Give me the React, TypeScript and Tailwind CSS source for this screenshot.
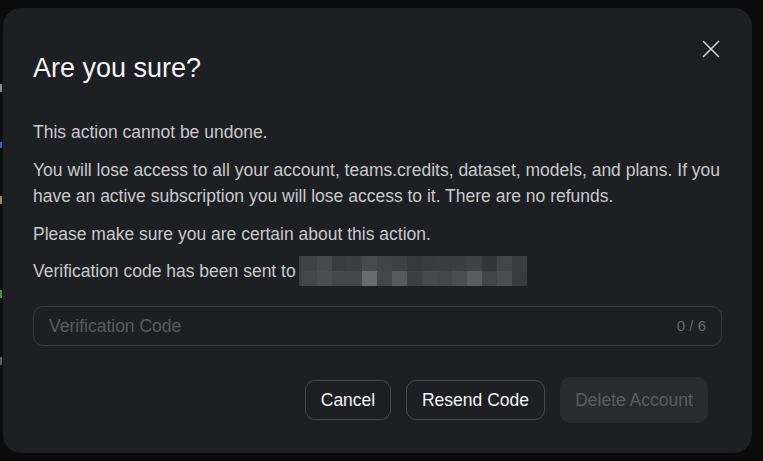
import { X } from "lucide-react";

const pixelRows = [
  [
    "bg-[#404244]", "bg-[#47494b]", "bg-[#3a3b3d]", "bg-[#3d3e40]", "bg-[#484a4c]",
    "bg-[#424345]", "bg-[#3f4042]", "bg-[#37383a]", "bg-[#3a3b3d]", "bg-[#3b3c3e]",
    "bg-[#3d3e40]", "bg-[#404143]", "bg-[#333436]", "bg-[#434547]", "bg-[#3c3d3f]",
  ],
  [
    "bg-[#444648]", "bg-[#4a4c4e]", "bg-[#454749]", "bg-[#454749]", "bg-[#6a6b6d]",
    "bg-[#434547]", "bg-[#58595b]", "bg-[#3e3f41]", "bg-[#47484a]", "bg-[#444547]",
    "bg-[#4c4d4f]", "bg-[#5a5b5d]", "bg-[#434446]", "bg-[#4c4d4f]", "bg-[#3a3b3d]",
  ],
];

// blurred-out email address
function RedactedEmail() {
  return (
    <div className="ml-[3px] flex flex-col bg-[#3e3f41] pl-[3px]">
      {pixelRows.map((row, i) => (
        <div key={i} className="flex">
          {row.map((c, j) => (
            <div key={j} className={`h-[15px] w-[15px] ${c}`} />
          ))}
        </div>
      ))}
    </div>
  );
}

export default function App() {
  return (
    <div
      className="relative h-[461px] w-[763px] overflow-hidden bg-[#0b0b0c] pl-[3px] pt-[8px]"
      style={{ fontFamily: '"Liberation Sans", Arial, sans-serif' }}
    >
      {/* bits of the page behind the overlay */}
      <div className="absolute left-0 top-[84px] h-[8px] w-[2px] bg-[#8a8a8a]" />
      <div className="absolute left-0 top-[142px] h-[6px] w-[2px] bg-[#3b5bd6]" />
      <div className="absolute left-0 top-[196px] h-[8px] w-[2px] bg-[#a08a50]" />
      <div className="absolute left-0 top-[290px] h-[8px] w-[2px] bg-[#3f9a2c]" />
      <div className="absolute left-0 top-[357px] h-[8px] w-[2px] bg-[#5a5f66]" />

      <div className="relative flex h-[445px] w-[749px] flex-col rounded-[18px] bg-[#1e1f22] px-[30px] pt-[45px] pb-[30px]">
        <button className="absolute right-[26px] top-[26px] text-[#d6d6d8]">
          <X size={30} strokeWidth={1.2} />
        </button>

        <h2 className="text-[27px] leading-[30px] text-[#f4f4f5]">Are you sure?</h2>

        <div className="mt-[36px] flex flex-col gap-[12px] text-[17.5px] leading-[26px] text-[#c8c9cc]">
          <p>This action cannot be undone.</p>
          <p>
            You will lose access to all your account, teams.credits, dataset, models, and plans. If you
            have an active subscription you will lose access to it. There are no refunds.
          </p>
          <p>Please make sure you are certain about this action.</p>
          <div className="-mt-[3px] flex items-center">
            <span>Verification code has been sent to</span>
            <RedactedEmail />
          </div>
        </div>

        <div className="mt-[20px] flex h-[40px] items-center justify-between rounded-[10px] border border-[#3a3b3e] px-[15px]">
          <span className="text-[17.5px] text-[#5b5c60]">Verification Code</span>
          <span className="text-[15px] text-[#6a6b6f]">0 / 6</span>
        </div>

        <div className="mt-auto mr-[14px] flex items-center justify-end gap-[15px]">
          <button className="h-[40px] w-[86px] rounded-[10px] border border-[#4a4b4f] text-[17.5px] text-[#f4f4f5]">
            Cancel
          </button>
          <button className="h-[40px] w-[139px] rounded-[10px] border border-[#4a4b4f] text-[17.5px] text-[#f4f4f5]">
            Resend Code
          </button>
          <button className="h-[46px] w-[148px] rounded-[10px] bg-[#2a2b2e] text-[17.5px] text-[#5d5e62]">
            Delete Account
          </button>
        </div>
      </div>
    </div>
  );
}
